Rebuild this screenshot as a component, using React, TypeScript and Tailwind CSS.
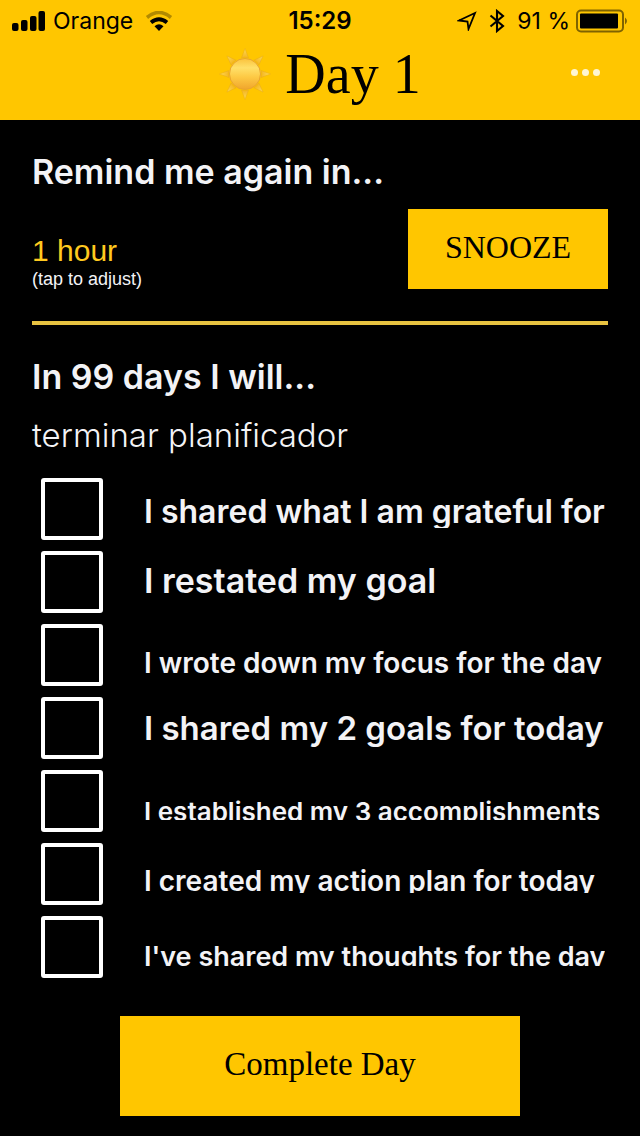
import React from "react";

const tasks = [
  { id: "grateful", label: "I shared what I am grateful for", text: "text-[32px] leading-[48px]" },
  { id: "goal", label: "I restated my goal", text: "text-[34px] leading-[40px]" },
  { id: "focus", label: "I wrote down my focus for the day", text: "text-[28px] leading-[58px]" },
  { id: "goals", label: "I shared my 2 goals for today", text: "text-[33px] leading-[42px]" },
  { id: "accomplishments", label: "I established my 3 accomplishments", text: "text-[26px] leading-[64px]" },
  { id: "plan", label: "I created my action plan for today", text: "text-[28px] leading-[56px]" },
  { id: "thoughts", label: "I've shared my thoughts for the day", text: "text-[27px] leading-[62px]" },
];

const rays = [0, 45, 90, 135, 180, 225, 270, 315];

const SunIcon: React.FC = () => (
  <svg viewBox="0 0 52 52" className="size-13" aria-hidden="true">
    <defs>
      <linearGradient id="sun" x1="0" y1="0" x2="0" y2="1">
        <stop offset="0" stopColor="#fbc23c" />
        <stop offset="0.3" stopColor="#ffe06a" />
        <stop offset="0.6" stopColor="#fdc944" />
        <stop offset="1" stopColor="#f0a52c" />
      </linearGradient>
      <linearGradient id="ray" x1="0" y1="0" x2="0" y2="1">
        <stop offset="0" stopColor="#ffdc55" />
        <stop offset="1" stopColor="#f4b420" />
      </linearGradient>
    </defs>
    {rays.map((angle) => (
      <path
        key={angle}
        d="M26 0.5 L29.5 10 Q26 8.5 22.5 10 Z"
        fill="url(#ray)"
        stroke="#e8ac1a"
        strokeWidth="0.5"
        transform={`rotate(${angle} 26 26)`}
      />
    ))}
    <circle cx="26" cy="26" r="15.5" fill="url(#sun)" stroke="#e9a52f" strokeWidth="1" />
  </svg>
);

const StatusBar: React.FC = () => (
  <div className="grid h-[42px] grid-cols-[1fr_auto_1fr] items-center px-3 text-[23px] leading-8">
    <div className="flex items-center gap-2">
      <svg viewBox="0 0 33 20" className="h-5 w-[33px]" aria-hidden="true">
        <rect x="0" y="12" width="6.5" height="8" rx="2" />
        <rect x="9" y="9" width="6.5" height="11" rx="2" />
        <rect x="18" y="5" width="6.5" height="15" rx="2" />
        <rect x="26.5" y="0" width="6.5" height="20" rx="2" />
      </svg>
      <span>Orange</span>
      <svg viewBox="0 0 28 20" className="ml-1 h-5 w-7" fill="none" aria-hidden="true">
        <path d="M2 6.5 Q14 -3.5 26 6.5" stroke="#000" strokeWidth="3.6" opacity="0.3" />
        <path d="M6 11.5 Q14 5 22 11.5" stroke="#000" strokeWidth="3.8" />
        <path d="M14 20 L9.5 15.2 Q14 11.5 18.5 15.2 Z" fill="#000" />
      </svg>
    </div>
    <span className="text-[24px] font-semibold">15:29</span>
    <div className="flex items-center justify-end gap-3">
      <svg viewBox="0 0 20 20" className="size-5" fill="none" stroke="#000" strokeWidth="1.8" aria-hidden="true">
        <path d="M2 9.5 L18 2 L11.5 18 L10.5 10.5 Z" />
      </svg>
      <svg viewBox="0 0 16 24" className="h-6 w-4" fill="none" stroke="#000" strokeWidth="2.1" aria-hidden="true">
        <path d="M1.5 6.5 L14 17 L8 22 V2 L14 7 L1.5 17.5" />
      </svg>
      <span>91 %</span>
      <svg viewBox="0 0 54 24" className="-ml-2 h-6 w-[54px]" aria-hidden="true">
        <rect x="3" y="1.5" width="46" height="21" rx="4" fill="none" stroke="#000" strokeOpacity="0.5" strokeWidth="2" />
        <rect x="6" y="4.5" width="38" height="15" rx="1" />
        <path d="M51 8.5 Q55 12 51 15.5 Z" opacity="0.5" />
      </svg>
    </div>
  </div>
);

const App: React.FC = () => {
  return (
    <div className="min-h-screen bg-black font-['Inter',sans-serif] text-[#f3f3f6]">
      <header className="h-30 bg-[#ffc600] text-black">
        <StatusBar />
        <div className="grid grid-cols-[1fr_auto_1fr] px-8">
          <h1 className="col-start-2 flex items-center gap-3.5 font-['Palatino','Liberation_Serif',serif] text-[56px] leading-16">
            <SunIcon />
            Day 1
          </h1>
          <button type="button" aria-label="More options" className="flex h-15 items-center gap-1 justify-self-end px-2">
            <span className="size-[7px] rounded-full bg-[#fff6d0]" />
            <span className="size-[7px] rounded-full bg-[#fff6d0]" />
            <span className="size-[7px] rounded-full bg-[#fff6d0]" />
          </button>
        </div>
      </header>

      <main className="px-8 pt-8 pb-5">
        <h2 className="text-[34px] leading-10 font-semibold">Remind me again in...</h2>
        <div className="mt-[17px] flex items-end justify-between">
          <button type="button" className="text-left font-['Liberation_Sans',sans-serif]">
            <span className="block text-[30px] leading-9 text-[#ffc91f]">1 hour</span>
            <span className="block text-[18px] leading-5">(tap to adjust)</span>
          </button>
          <button
            type="button"
            className="h-20 w-50 bg-[#ffc600] pb-1 font-['Palatino','Liberation_Serif',serif] text-[32px] text-black"
          >
            SNOOZE
          </button>
        </div>

        <hr className="my-8 h-1 border-0 bg-[#e8c341]" />

        <h2 className="text-[34px] leading-10 font-semibold">In 99 days I will...</h2>
        <p className="mt-[18px] text-[33px] leading-10 font-light">terminar planificador</p>

        <ul className="mt-[23px] space-y-[11px] pl-[9px]">
          {tasks.map((task) => (
            <li key={task.id} className="flex h-[62px] items-center gap-[41px]">
              <input
                id={task.id}
                type="checkbox"
                className="size-[62px] shrink-0 appearance-none rounded-[3px] border-4 border-white checked:bg-[#ffc600]"
              />
              {/* fixed height label, long lines lose their descenders */}
              <label
                htmlFor={task.id}
                className={`-mt-0.5 h-10 overflow-hidden font-semibold whitespace-nowrap ${task.text}`}
              >
                {task.label}
              </label>
            </li>
          ))}
        </ul>

        <button
          type="button"
          className="mx-auto mt-[38px] block h-25 w-100 bg-[#ffc600] pb-0.5 font-['Palatino','Liberation_Serif',serif] text-[33px] text-black"
        >
          Complete Day
        </button>
      </main>
    </div>
  );
};

export default App;
